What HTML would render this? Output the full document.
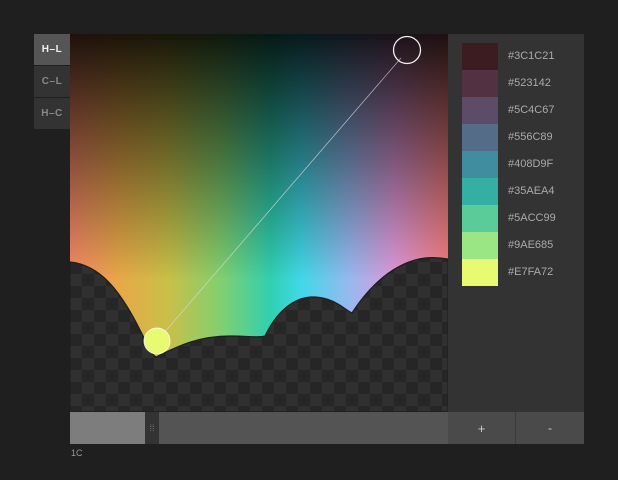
<!DOCTYPE html>
<html><head><style>
body{margin:0;width:618px;height:480px;background:#1f1f1f;font-family:"Liberation Sans",sans-serif;position:relative;overflow:hidden}
.tab{position:absolute;left:34px;width:36px;height:31px;background:#333;color:#888;font-size:10px;font-weight:bold;text-align:center;line-height:31px;letter-spacing:0.5px}
.panel{position:absolute;left:448px;top:34px;width:136px;height:378px;background:#333}
.sw{position:absolute;left:14px;width:36px;height:27px}
.lb{position:absolute;left:60px;color:#aaa;font-size:11px;line-height:27px}
</style></head><body>
<div class="tab" style="top:34px;background:#555;color:#eee">H–L</div>
<div class="tab" style="top:66px">C–L</div>
<div class="tab" style="top:98px">H–C</div>
<svg style="position:absolute;left:70px;top:34px" width="378" height="378" viewBox="70 34 378 378">
<defs>
<linearGradient id="h" x1="70" x2="448" y1="0" y2="0" gradientUnits="userSpaceOnUse">
<stop offset="0" stop-color="#f88a68"/><stop offset="0.13" stop-color="#e8a848"/><stop offset="0.26" stop-color="#c8c048"/><stop offset="0.4" stop-color="#80d070"/><stop offset="0.53" stop-color="#30d0b0"/><stop offset="0.61" stop-color="#40d8e8"/><stop offset="0.74" stop-color="#98b8f0"/><stop offset="0.86" stop-color="#e098d8"/><stop offset="1" stop-color="#f88080"/>
</linearGradient>
<linearGradient id="v" x1="0" x2="0" y1="34" y2="280" gradientUnits="userSpaceOnUse">
<stop offset="0" stop-color="#000" stop-opacity="0.88"/><stop offset="0.5" stop-color="#000" stop-opacity="0.45"/><stop offset="1" stop-color="#000" stop-opacity="0"/>
</linearGradient>
<pattern id="c" x="70" y="34" width="24" height="24" patternUnits="userSpaceOnUse">
<rect width="24" height="24" fill="#262626"/><rect width="12" height="12" fill="#303030"/><rect x="12" y="12" width="12" height="12" fill="#303030"/>
</pattern>
</defs>
<rect x="70" y="34" width="378" height="378" fill="url(#h)"/>
<rect x="70" y="34" width="378" height="378" fill="url(#v)"/>
<path d="M70,262 C100,265 120,290 140,330 C148,345 152,355 156,357 C180,345 200,336 230,336 C250,336 258,338 265,336 C280,305 300,296 315,297 C335,298 345,310 352,313 C370,285 395,262 425,258 C435,257 442,258 448,259 L448,412 L70,412 Z" fill="url(#c)" stroke="#1e1e1e" stroke-width="1.2"/>
<line x1="157" y1="341" x2="401" y2="58" stroke="#ddd" stroke-opacity="0.7" stroke-width="0.8"/>
<circle cx="407" cy="50" r="13.5" fill="none" stroke="#eee" stroke-width="1.3"/>
<circle cx="157" cy="341" r="13" fill="#e7fa72" stroke="#fff" stroke-opacity="0.8" stroke-width="1"/>
</svg>
<div class="panel">
<div class="sw" style="top:9px;background:#3c1c21"></div><div class="lb" style="top:9px">#3C1C21</div>
<div class="sw" style="top:36px;background:#523142"></div><div class="lb" style="top:36px">#523142</div>
<div class="sw" style="top:63px;background:#5c4c67"></div><div class="lb" style="top:63px">#5C4C67</div>
<div class="sw" style="top:90px;background:#556c89"></div><div class="lb" style="top:90px">#556C89</div>
<div class="sw" style="top:117px;background:#408d9f"></div><div class="lb" style="top:117px">#408D9F</div>
<div class="sw" style="top:144px;background:#35aea4"></div><div class="lb" style="top:144px">#35AEA4</div>
<div class="sw" style="top:171px;background:#5acc99"></div><div class="lb" style="top:171px">#5ACC99</div>
<div class="sw" style="top:198px;background:#9ae685"></div><div class="lb" style="top:198px">#9AE685</div>
<div class="sw" style="top:225px;background:#e7fa72"></div><div class="lb" style="top:225px">#E7FA72</div>
</div>
<div style="position:absolute;left:70px;top:412px;width:378px;height:32px;background:#545454"></div>
<div style="position:absolute;left:70px;top:412px;width:75px;height:32px;background:#7d7d7d"></div>
<div style="position:absolute;left:145px;top:412px;width:14px;height:32px;background:#333;color:#777;font-size:9px;text-align:center;line-height:32px">⁞⁞</div>
<div style="position:absolute;left:448px;top:412px;width:67px;height:32px;background:#4a4a4a;border-right:1px solid #3a3a3a;color:#ccc;text-align:center;line-height:34px;font-size:13px">+</div>
<div style="position:absolute;left:516px;top:412px;width:68px;height:32px;background:#4a4a4a;color:#ccc;text-align:center;line-height:32px;font-size:12px">-</div>
<div style="position:absolute;left:71px;top:448px;color:#999;font-size:9px">1C</div>
</body></html>
